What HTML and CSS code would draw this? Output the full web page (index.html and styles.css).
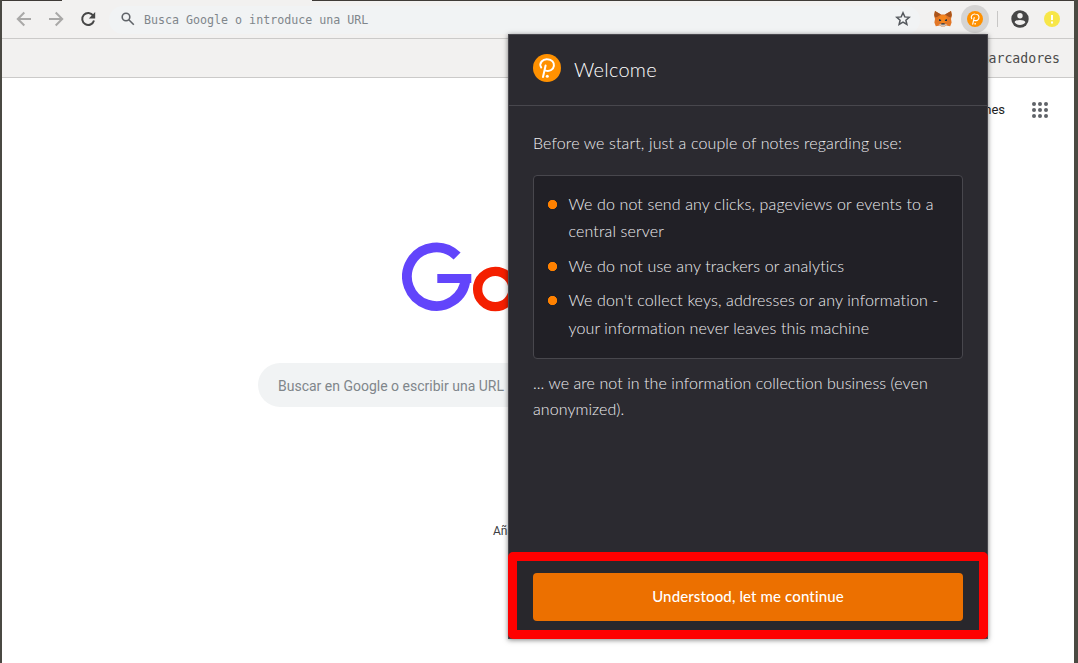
FILE: index.html
```html
<!DOCTYPE html>
<html lang="es">
<head>
<meta charset="utf-8">
<title>Nueva pestaña</title>
<link rel="stylesheet" href="styles.css">
</head>
<body>
<div class="window">
  <div class="tabstrip"><div class="tab"></div></div>
  <div class="toolbar">
    <div class="nav">
      <svg class="icon nav-off" width="16" height="16" viewBox="0 0 16 16"><path d="M15 8H2M8.300 1.500 1.800 8l6.500 6.500"/></svg>
      <svg class="icon nav-off" width="16" height="16" viewBox="0 0 16 16"><path d="M1 8h13M7.700 1.500 14.200 8l-6.500 6.500"/></svg>
      <svg class="icon" width="16" height="16" viewBox="0 0 16 16"><path class="reload" d="M13.200 4.600A6 6 0 1 0 14 9.600"/><path class="reload-head" d="M15.200 1v6.400H8.800z"/></svg>
    </div>
    <div class="omnibox">
      <svg class="icon" width="14" height="14" viewBox="0 0 14 14"><circle class="lens" cx="5" cy="5" r="3.800"/><path class="lens" d="M7.800 7.800l5 5"/></svg>
      <span class="omnibox-text">Busca Google o introduce una URL</span>
      <svg class="icon star" width="16" height="16" viewBox="0 0 16 16"><path d="M8 1.800l1.800 4.100 4.400.4-3.300 2.900 1 4.300L8 11.200l-3.900 2.300 1-4.300L1.800 6.300 6.200 5.900z"/></svg>
    </div>
    <div class="extensions">
      <svg class="icon" width="18" height="16" viewBox="0 0 18 16">
        <path fill="#e27625" d="M1 0l6 3.500h4L17 0l.8 4-.8 4 .6 3.500-1.400 3.800-4-.9-1.600 1.200H7.400l-1.600-1.200-4 .9L.400 11.500 1 8 .200 4z"/>
        <path fill="#f6851b" d="M6 5l3-1 3 1 1.500 4L9 13 4.500 9z"/>
        <path fill="#a8541c" d="M1 0l6 3.500L3 6 .900 6.400.200 4zM17 0l-6 3.500L15 6l2.100.4.7-2.400z"/>
        <path fill="#d7c1b3" d="M4.500 14l1.300-.8L7.500 13h3l1.700.2 1.300.8-1.900.6-1.200 1H7.600l-1.200-1z"/>
        <path fill="#233447" d="M5 8l2.300 1-.4.900H5zM13 8l-2.300 1 .4.900H13zM7.500 12.300h3l.300 1.300H7.200z"/>
      </svg>
      <div class="extension-active">
        <svg class="icon" width="16" height="16" viewBox="0 0 28 28"><circle cx="14" cy="14" r="14" fill="#ff9100"/><path class="mark" d="M8.200 13.400C5.500 9 10 4.800 14.400 5.200c4.500.3 7 3.300 6.500 6.700-.5 3.600-4 5.800-8.200 4.700M12.600 11.500 10 23"/><circle cx="14.300" cy="22.300" r="1.500" fill="#fff"/></svg>
      </div>
      <div class="divider"></div>
      <svg class="icon avatar" width="18" height="18" viewBox="0 0 18 18"><circle cx="9" cy="9" r="8.700" fill="#464646"/><circle cx="9" cy="5.800" r="2.700" fill="#f2f1f0"/><path fill="#f2f1f0" d="M3.600 12.200c.8-3 10-3 10.800 0-2.300 3.600-8.500 3.600-10.800 0z"/></svg>
      <svg class="icon" width="16" height="16" viewBox="0 0 16 16"><circle cx="8" cy="8" r="8" fill="#f7e648"/><path fill="#fff" d="M7 4h2v5H7zM7 10.500h2v2H7z"/></svg>
    </div>
  </div>
  <div class="bookmarks">Otros marcadores</div>
  <div class="page">
    <div class="page-links">
      <span class="images-link">Imágenes</span>
      <svg class="icon" width="16" height="16" viewBox="0 0 16 16" fill="#5f6368"><circle cx="2" cy="2" r="2"/><circle cx="8" cy="2" r="2"/><circle cx="14" cy="2" r="2"/><circle cx="2" cy="8" r="2"/><circle cx="8" cy="8" r="2"/><circle cx="14" cy="8" r="2"/><circle cx="2" cy="14" r="2"/><circle cx="8" cy="14" r="2"/><circle cx="14" cy="14" r="2"/></svg>
    </div>
    <svg class="logo" width="120" height="72" viewBox="0 0 120 72"><path fill="none" stroke="#6245fb" stroke-width="9.800" d="M55.100 15A29.300 29.300 0 1 0 63.500 38"/><path fill="none" stroke="#6245fb" stroke-width="9" d="M35.300 37.500H69.300"/><circle cx="93.300" cy="48" r="17.700" fill="none" stroke="#f41f00" stroke-width="9.300"/></svg>
    <div class="search">Buscar en Google o escribir una URL</div>
    <div class="shortcut">Añadir acceso directo</div>
  </div>
</div>

<div class="popup">
  <div class="popup-header">
    <svg class="icon" width="28" height="28" viewBox="0 0 28 28"><circle cx="14" cy="14" r="14" fill="#ff9100"/><path class="mark" d="M8.200 13.400C5.500 9 10 4.800 14.400 5.200c4.500.3 7 3.300 6.500 6.700-.5 3.600-4 5.800-8.200 4.700M12.600 11.500 10 23"/><circle cx="14.300" cy="22.300" r="1.500" fill="#fff"/></svg>
    <h1 class="title">Welcome</h1>
  </div>
  <div class="popup-body">
    <p class="intro">Before we start, just a couple of notes regarding use:</p>
    <ul class="notes">
      <li class="note">We do not send any clicks, pageviews or events to a<br>central server</li>
      <li class="note">We do not use any trackers or analytics</li>
      <li class="note">We don't collect keys, addresses or any information -<br>your information never leaves this machine</li>
    </ul>
    <p class="outro">... we are not in the information collection business (even<br>anonymized).</p>
  </div>
  <div class="popup-footer"><button class="continue">Understood, let me continue</button></div>
</div>
</body>
</html>
```
FILE: styles.css
```css
* { box-sizing: border-box; }
body { margin: 0; overflow: hidden; }
.icon { display: block; flex: none; }
.window {
  height: 663px;
  display: flex;
  flex-direction: column;
  border-left: 2px solid #4a4943;
  border-right: 4px solid #4a4a42;
  background: #fff;
}
.tabstrip { height: 1px; background: #3f3b37; padding-left: 60px; }
.tab { width: 250px; height: 1px; background: #f2f1f0; }
.toolbar {
  height: 38px;
  display: flex;
  align-items: center;
  background: #f2f1f0;
  border-bottom: 1px solid #cbcac9;
  padding: 0 14px;
}
.nav { display: flex; gap: 16px; padding-bottom: 1px; }
.nav .icon { fill: none; stroke: #464646; stroke-width: 2; }
.nav .nav-off { stroke: #a9a8a7; }
.nav .reload-head { fill: #464646; stroke: none; }
.omnibox {
  width: 811px;
  height: 28px;
  margin-left: 13px;
  padding: 0 9px 1px 12px;
  border-radius: 14px;
  background: #f1f3f4;
  display: flex;
  align-items: center;
}
.lens { fill: none; stroke: #5f6368; stroke-width: 1.6; }
.omnibox-text {
  flex: 1;
  margin-left: 9px;
  padding-top: 2px;
  font: 11.65px "DejaVu Sans Mono", monospace;
  color: #80868b;
  white-space: nowrap;
}
.star { fill: none; stroke: #54585d; stroke-width: 1.5; }
.extensions { display: flex; align-items: center; margin-left: 14px; padding-bottom: 1px; }
.extension-active {
  width: 28px;
  height: 28px;
  margin-left: 9px;
  border-radius: 50%;
  background: #d5d4d3;
  display: flex;
  align-items: center;
  justify-content: center;
}
.mark { fill: none; stroke: #fff; stroke-width: 2; stroke-linecap: round; }
.divider { width: 1px; height: 16px; margin-left: 8px; background: #c8c7c6; }
.avatar { margin: 0 15px 0 13px; }
.bookmarks {
  height: 39px;
  padding-right: 14px;
  background: #f2f1f0;
  border-bottom: 1px solid #cbcac9;
  text-align: right;
  font: 13.2px/40px "DejaVu Sans Mono", monospace;
  color: #4b4b4b;
}
.page { flex: 1; display: flex; flex-direction: column; }
.page-links {
  height: 64px;
  display: flex;
  align-items: center;
  justify-content: flex-end;
  gap: 27px;
  padding-right: 26px;
}
.images-link { margin-bottom: 2px; font: 13px Roboto, sans-serif; color: #222; }
.logo { margin: 99px 0 0 400px; }
.search {
  width: 560px;
  height: 44px;
  margin: 50px 0 0 256px;
  padding-left: 20px;
  border-radius: 22px;
  background: #f1f3f4;
  font: 14px/46px Roboto, sans-serif;
  color: #80868b;
}
.shortcut { margin: 117px 0 0 491px; font: 12px/14px Roboto, sans-serif; color: #3c4043; }
.popup {
  position: absolute;
  left: 508px;
  top: 34px;
  width: 480px;
  height: 605px;
  display: flex;
  flex-direction: column;
  background: #2b2a30;
  border: 1px solid #48474d;
  box-shadow: 0 1px 5px rgba(0, 0, 0, .5);
  font: 300 16px/26px Lato, sans-serif;
  letter-spacing: .13px;
  color: #efeef1;
}
.popup-header {
  height: 71px;
  display: flex;
  align-items: center;
  gap: 13px;
  padding: 0 24px 4px;
  border-bottom: 1px solid #48474d;
}
.title { margin: 2px 0 0; font-size: 20px; font-weight: 300; letter-spacing: .25px; color: #fff; }
.popup-body { flex: 1; padding: 24px 24px 0; white-space: nowrap; }
.intro { margin: 0 0 19px; }
.notes {
  height: 184px;
  margin: 0 0 11px;
  padding: 14px 14px 0;
  list-style: none;
  line-height: 27.4px;
  background: #212026;
  border: 1px solid #48474d;
  border-radius: 4px;
}
.note {
  margin-bottom: 7.1px;
  padding-left: 20.5px;
  background: radial-gradient(circle at 4.5px 14.5px, #ff8100 4.3px, transparent 5px);
}
.outro { margin: 0; letter-spacing: .07px; }
.popup-footer {
  height: 87px;
  margin: 0 -1px -1px;
  padding: 12px 16px;
  border: 9px solid #f00;
  border-radius: 5px;
  background: #28272c;
}
.continue {
  width: 430px;
  height: 48px;
  padding: 0 0 2px;
  border: 0;
  border-radius: 4px;
  background: #ec7000;
  color: #fff;
  font: 500 15px Lato, sans-serif;
  letter-spacing: .13px;
}
```
